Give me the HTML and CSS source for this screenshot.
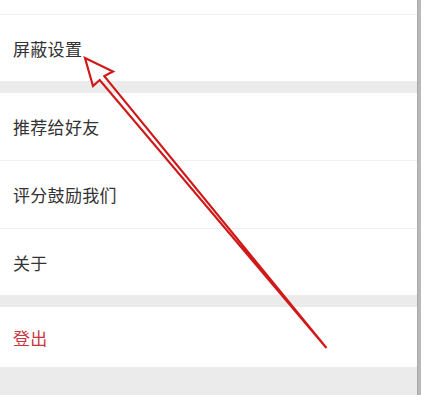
FILE: index.html
```html
<!DOCTYPE html>
<html lang="zh-CN">
<head>
<meta charset="utf-8">
<title>设置</title>
<link rel="stylesheet" href="styles.css">
</head>
<body>
<div class="screen">
  <main class="settings">
    <div class="top-space"></div>
    <div class="group">
      <div class="item">屏蔽设置</div>
    </div>
    <div class="gap"></div>
    <div class="group">
      <div class="item item-tall">推荐给好友</div>
      <div class="item item-tall">评分鼓励我们</div>
      <div class="item item-tall">关于</div>
    </div>
    <div class="gap"></div>
    <div class="group">
      <div class="item item-short logout">登出</div>
    </div>
    <div class="bottom-fill"></div>
  </main>
  <div class="scrollbar"></div>
  <div class="edge"></div>
  <svg class="annotation" width="424" height="395" viewBox="0 0 424 395" aria-hidden="true">
    <polygon points="85,58 113,71.5 104.3,76.1 326.5,348 99.7,80 93,86" fill="none" stroke="#d01a1a" stroke-width="2.2" stroke-linejoin="miter"/>
  </svg>
</div>
</body>
</html>
```

FILE: styles.css
```css
html, body {
  margin: 0;
  padding: 0;
  background: #ffffff;
}

body {
  font-family: "Noto Sans CJK SC", "Noto Sans", sans-serif;
}

.screen {
  position: relative;
  width: 424px;
  height: 395px;
  overflow: hidden;
  display: flex;
}

.settings {
  flex: 1;
  display: flex;
  flex-direction: column;
  background: #ffffff;
}

.top-space {
  height: 14px;
  border-bottom: 1px solid #efefef;
  flex: none;
}

.group {
  display: flex;
  flex-direction: column;
  background: #ffffff;
  flex: none;
}

.item {
  box-sizing: border-box;
  height: 66px;
  display: flex;
  align-items: center;
  padding-left: 13px;
  font-size: 17px;
  color: #333333;
  letter-spacing: 0.3px;
}

.item-tall {
  height: 67px;
}

.item + .item {
  border-top: 1px solid #efefef;
  height: 68px;
}

.item-tall:last-child {
  height: 67px;
}

.item-short {
  height: 60px;
}

.logout {
  color: #c93541;
}

.gap {
  height: 12px;
  background: #ebebeb;
  flex: none;
}

.bottom-fill {
  flex: 1;
  background: #ebebeb;
}

.scrollbar {
  width: 4px;
  flex: none;
  background: #b9b9b9;
  border-left: 1px solid #a9a9a9;
  box-sizing: border-box;
}

.edge {
  width: 3px;
  flex: none;
  background: #ffffff;
}

.annotation {
  position: absolute;
  left: 0;
  top: 0;
  pointer-events: none;
}
```
